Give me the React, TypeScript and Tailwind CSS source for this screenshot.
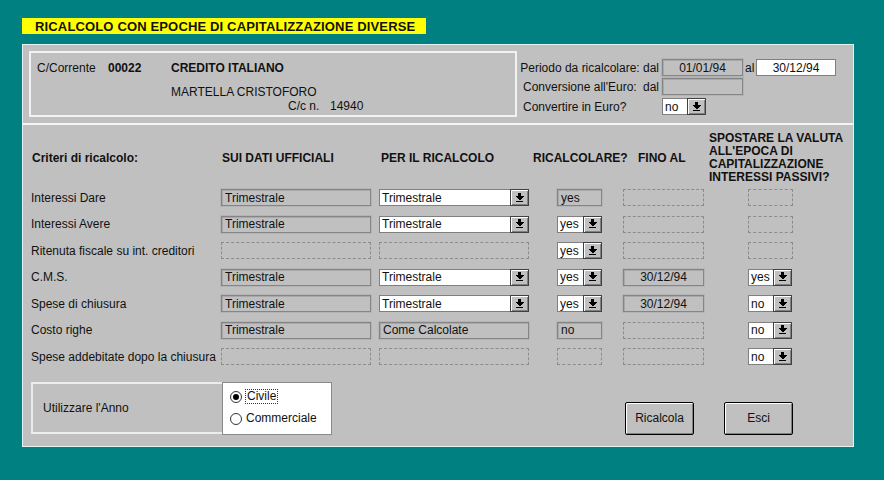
import React from "react";

const Arrow = () => (
  <svg width="9" height="10" viewBox="0 0 9 10" shapeRendering="crispEdges">
    <rect x="3" y="0" width="3" height="3" fill="#000" />
    <path d="M0 3 H9 L4.5 7.5 Z" fill="#000" />
    <rect x="1" y="8" width="7" height="1" fill="#000" />
  </svg>
);

const DD = ({ value, w }: { value: string; w: number }) => (
  <div className="flex h-[17px]">
    <div
      className="h-full bg-white border border-[#808080] border-r-0 pl-[2px] flex items-center leading-none"
      style={{ width: w }}
    >
      {value}
    </div>
    <div className="h-full w-[19px] bg-[#c0c0c0] border border-[#404040] shadow-[inset_1px_1px_0_#fff,inset_-1px_-1px_0_#808080] flex items-center justify-center">
      <Arrow />
    </div>
  </div>
);

const Gray = ({ value, w, center }: { value: string; w: number; center?: boolean }) => (
  <div
    className={
      "h-[17px] bg-[#c0c0c0] border border-[#858585] shadow-[inset_1px_1px_0_#a8a8a8,0_0_0_1px_#b4b4b4] flex items-center leading-none " +
      (center ? "justify-center" : "pl-[3px]")
    }
    style={{ width: w }}
  >
    {value}
  </div>
);

const Dash = ({ w }: { w: number }) => (
  <div className="h-[17px] border border-dashed border-[#8c8c8c]" style={{ width: w }} />
);

type Cell = React.ReactNode;

const rows: { label: string; c1: Cell; c2: Cell; c3: Cell; c4: Cell; c5: Cell }[] = [
  {
    label: "Interessi Dare",
    c1: <Gray value="Trimestrale" w={150} />,
    c2: <DD value="Trimestrale" w={131} />,
    c3: <Gray value="yes" w={45} />,
    c4: <Dash w={81} />,
    c5: <Dash w={45} />,
  },
  {
    label: "Interessi Avere",
    c1: <Gray value="Trimestrale" w={150} />,
    c2: <DD value="Trimestrale" w={131} />,
    c3: <DD value="yes" w={26} />,
    c4: <Dash w={81} />,
    c5: <Dash w={45} />,
  },
  {
    label: "Ritenuta fiscale su int. creditori",
    c1: <Dash w={150} />,
    c2: <Dash w={150} />,
    c3: <DD value="yes" w={26} />,
    c4: <Dash w={81} />,
    c5: <Dash w={45} />,
  },
  {
    label: "C.M.S.",
    c1: <Gray value="Trimestrale" w={150} />,
    c2: <DD value="Trimestrale" w={131} />,
    c3: <DD value="yes" w={26} />,
    c4: <Gray value="30/12/94" w={81} center />,
    c5: <DD value="yes" w={25} />,
  },
  {
    label: "Spese di chiusura",
    c1: <Gray value="Trimestrale" w={150} />,
    c2: <DD value="Trimestrale" w={131} />,
    c3: <DD value="yes" w={26} />,
    c4: <Gray value="30/12/94" w={81} center />,
    c5: <DD value="no" w={25} />,
  },
  {
    label: "Costo righe",
    c1: <Gray value="Trimestrale" w={150} />,
    c2: <Gray value="Come Calcolate" w={150} />,
    c3: <Gray value="no" w={45} />,
    c4: <Dash w={81} />,
    c5: <DD value="no" w={25} />,
  },
  {
    label: "Spese addebitate dopo la chiusura",
    c1: <Dash w={150} />,
    c2: <Dash w={150} />,
    c3: <Dash w={45} />,
    c4: <Dash w={81} />,
    c5: <DD value="no" w={25} />,
  },
];

const grid = "grid grid-cols-[190px_158px_154px_90px_86px_1fr]";

export default function App() {
  return (
    <div className="w-[884px] h-[480px] bg-[#008080] pt-[18px] pl-[22px] font-['Liberation_Sans',Arial,sans-serif] text-[12px] text-[#111]">
      <div className="w-[404px] h-[16px] bg-[#ffff00] pl-[13px] flex items-center font-bold text-[13px] tracking-[0.15px] leading-none whitespace-nowrap">
        RICALCOLO CON EPOCHE DI CAPITALIZZAZIONE DIVERSE
      </div>

      <div className="mt-[10px] w-[832px] h-[403px] bg-[#c0c0c0] border border-[#e4f2f2] flex flex-col">
        {/* top section */}
        <div className="h-[80px] border-b-2 border-[#f4f4f4] flex items-start">
          <div className="ml-[6px] mt-[6px] w-[488px] h-[66px] border-2 border-[#f2f2f2] pl-[6px] pt-[9px] leading-[13px] whitespace-nowrap">
            <div className="flex">
              <span className="w-[71px]">C/Corrente</span>
              <span className="w-[63px] font-bold">00022</span>
              <span className="font-bold">CREDITO ITALIANO</span>
            </div>
            <div className="mt-[11px] pl-[134px]">MARTELLA CRISTOFORO</div>
            <div className="mt-[1px] pl-[251px] flex">
              <span className="w-[42px]">C/c n.</span>
              <span>14940</span>
            </div>
          </div>

          <div className="ml-[6px] mt-[14px] flex flex-col whitespace-nowrap">
            <div className="flex items-center h-[17px]">
              <div className="w-[139px] flex justify-end pr-[3px]">
                <span>Periodo da ricalcolare: dal</span>
              </div>
              <Gray value="01/01/94" w={81} center />
              <span className="w-[13px] pl-[2px]">al</span>
              <div className="w-[80px] h-[17px] bg-white border border-[#808080] flex items-center justify-center leading-none">
                30/12/94
              </div>
            </div>
            <div className="flex items-center h-[17px] mt-[2px]">
              <div className="w-[139px] flex justify-between pr-[3px]">
                <span>Conversione all'Euro:</span>
                <span>dal</span>
              </div>
              <Gray value="" w={81} />
            </div>
            <div className="flex items-center h-[17px] mt-[3px]">
              <div className="w-[139px]">Convertire in Euro?</div>
              <DD value="no" w={25} />
            </div>
          </div>
        </div>

        {/* bottom section */}
        <div className="flex-1 pl-[8px] pt-[6px]">
          <div className={grid + " items-center h-[54px] font-bold whitespace-nowrap"}>
            <div className="pl-[1px]">Criteri di ricalcolo:</div>
            <div className="pl-[1px]">SUI DATI UFFICIALI</div>
            <div className="pl-[2px]">PER IL RICALCOLO</div>
            <div>RICALCOLARE?</div>
            <div className="pl-[15px]">FINO AL</div>
            <div className="leading-[13px]">
              SPOSTARE LA VALUTA
              <br />
              ALL'EPOCA DI
              <br />
              CAPITALIZZAZIONE
              <br />
              INTERESSI PASSIVI?
            </div>
          </div>

          <div className="mt-[4px]">
            {rows.map((r) => (
              <div key={r.label} className={grid + " h-[26.5px] items-start"}>
                <div className="h-[17px] flex items-center whitespace-nowrap">{r.label}</div>
                <div>{r.c1}</div>
                <div>{r.c2}</div>
                <div className="pl-[24px]">{r.c3}</div>
                <div>{r.c4}</div>
                <div className="pl-[39px]">{r.c5}</div>
              </div>
            ))}
          </div>

          <div className="mt-[7px] flex items-start">
            <div className="w-[191px] h-[52px] border-2 border-[#ececec] border-r-0 flex items-center pl-[10px]">
              Utilizzare l'Anno
            </div>
            <div className="w-[110px] h-[53px] bg-white border border-[#8a8a8a] pl-[7px] pt-[6px] flex flex-col gap-[6px]">
              <div className="flex items-center gap-[3px] h-[16px]">
                <div className="w-[12px] h-[12px] rounded-full border border-[#333] bg-white flex items-center justify-center">
                  <div className="w-[6px] h-[6px] rounded-full bg-black" />
                </div>
                <span className="border border-dotted border-[#333] px-[1px] leading-[13px]">Civile</span>
              </div>
              <div className="flex items-center gap-[4px] h-[16px]">
                <div className="w-[12px] h-[12px] rounded-full border border-[#333] bg-white" />
                <span className="leading-[13px]">Commerciale</span>
              </div>
            </div>
            <div className="ml-[293px] mt-[20px] flex gap-[30px]">
              <div className="w-[69px] h-[33px] rounded-[2px] border border-black bg-[#c0c0c0] shadow-[inset_1px_1px_0_#fff,inset_-1px_-1px_0_#808080] flex items-center justify-center">
                Ricalcola
              </div>
              <div className="w-[69px] h-[33px] rounded-[2px] border border-black bg-[#c0c0c0] shadow-[inset_1px_1px_0_#fff,inset_-1px_-1px_0_#808080] flex items-center justify-center">
                Esci
              </div>
            </div>
          </div>
        </div>
      </div>
    </div>
  );
}
